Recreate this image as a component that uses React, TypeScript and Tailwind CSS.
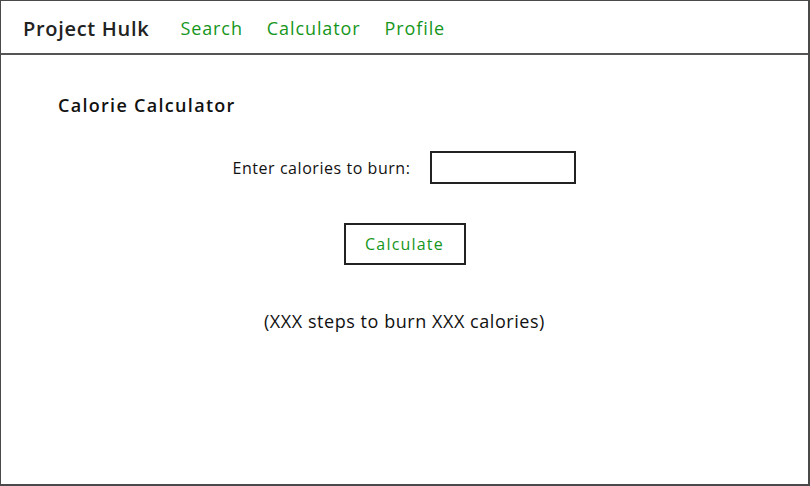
import React from "react";

export default function App() {
  return (
    <div
      className="w-[810px] h-[486px] bg-white border-l border-t border-r-2 border-b-2 border-[#4a4a4a] flex flex-col overflow-hidden"
      style={{ fontFamily: '"Open Sans", "Liberation Sans", sans-serif' }}
    >
      <header className="h-[54px] shrink-0 border-b-2 border-[#555] flex items-center pl-[22px] pt-[3px]">
        <span className="text-[20px] font-semibold text-[#222] tracking-[0.7px]">Project Hulk</span>
        <nav className="flex items-center gap-[24px] ml-[31px] text-[18px] text-[#16961c] tracking-[0.9px]">
          <span>Search</span>
          <span>Calculator</span>
          <span>Profile</span>
        </nav>
      </header>
      <main className="flex-1 flex flex-col">
        <h1 className="ml-[57px] mt-[37px] text-[18px] font-semibold text-[#111] leading-[26px] tracking-[1.3px]">Calorie Calculator</h1>
        <div className="flex items-center justify-center mt-[33px] gap-[20px]">
          <label className="text-[16px] text-[#111] tracking-[0.55px]">Enter calories to burn:</label>
          <div className="w-[146px] h-[33px] border-2 border-[#222]" />
        </div>
        <div className="flex justify-center mt-[39px]">
          <button className="w-[122px] h-[42px] border-2 border-[#222] text-[16px] text-[#16961c] bg-white tracking-[1.2px]">
            Calculate
          </button>
        </div>
        <p className="text-center mt-[43px] text-[18px] text-[#111] tracking-[0.55px]">(XXX steps to burn XXX calories)</p>
      </main>
    </div>
  );
}
